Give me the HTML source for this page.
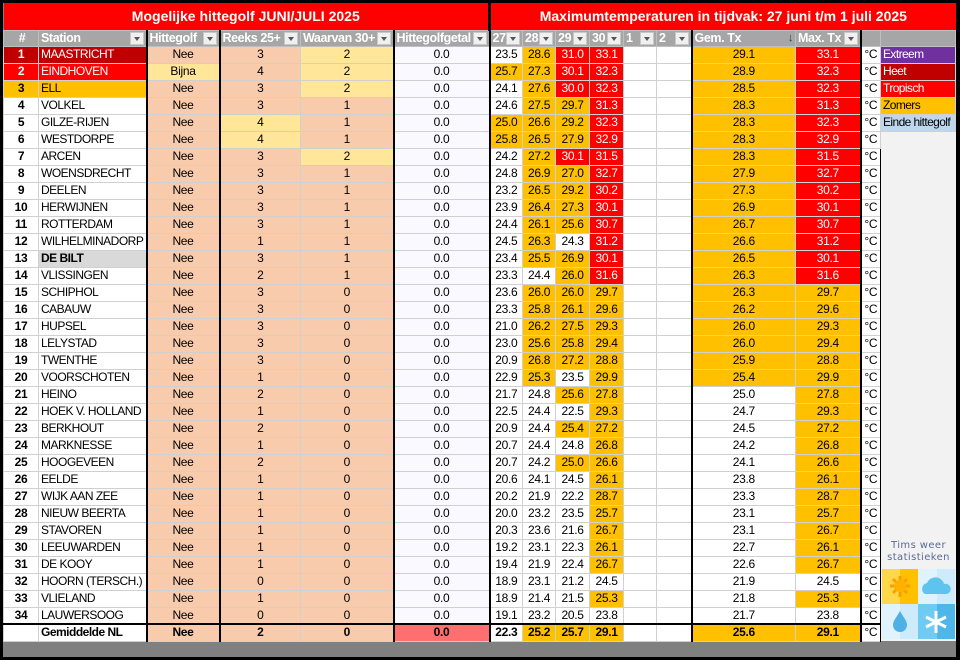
<!DOCTYPE html>
<html><head><meta charset="utf-8"><style>
*{margin:0;padding:0;box-sizing:border-box}
body{width:960px;height:660px;background:#000;overflow:hidden;font-family:"Liberation Sans",Arial,sans-serif;position:relative}
#wrap{position:absolute;left:3px;top:3px;width:953px;height:654px;background:#808080}
table{border-collapse:collapse;table-layout:fixed;width:953px;font-size:12px;letter-spacing:-0.3px}
td{border:1px solid #d0d0d0;height:17px;text-align:center;white-space:nowrap;overflow:hidden;padding:0;line-height:15px;color:#000;background:#fff}
tr.t td{height:27px;background:#f00;color:#fff;font-weight:bold;font-size:14px;border:none;letter-spacing:0}
tr.h td{height:16px;background:#a6a6a6;color:#fff;font-weight:bold;font-size:12.5px;text-align:left;padding-left:2px;position:relative;border:1px solid #bfbfbf;letter-spacing:-0.4px}
tr.h td i{position:absolute;right:2px;top:1px;width:14px;height:13px;background:#f0f0f0;border:1px solid #c8c8c8}
tr.h td i:after{content:"";position:absolute;left:3px;top:4px;border-left:3px solid transparent;border-right:3px solid transparent;border-top:4px solid #555}
tr.h td b.s{position:absolute;right:2px;top:0;font-size:11px;color:#333;font-weight:normal}
tr.d td:nth-child(2),tr.h td:nth-child(2){border-left:1px solid #000}
tr.d td:nth-child(3),tr.d td:nth-child(4),tr.d td:nth-child(6),tr.d td:nth-child(7),tr.d td:nth-child(13),tr.d td:nth-child(15),
tr.h td:nth-child(3),tr.h td:nth-child(4),tr.h td:nth-child(6),tr.h td:nth-child(7),tr.h td:nth-child(13),tr.h td:nth-child(15){border-left:2px solid #000}
tr.d td:nth-child(1){font-weight:bold}
tr.d td:nth-child(2){text-align:left;padding-left:2px;letter-spacing:-0.5px}
.p{background:#f8cbad}.y{background:#ffe699}.g{background:#f9f9ff}
.o{background:#ffc000}.r{background:#f00;color:#fff}.dr{background:#c00000;color:#fff}
.gr{background:#d9d9d9;font-weight:bold}
tr.a td{font-weight:bold;border-top:2px solid #000}
td.lg{text-align:left;padding-left:2px;border:1px solid #d0d0d0;letter-spacing:-0.6px}
td.c{font-size:12px}
</style></head><body><div id="wrap"><table>
<colgroup><col style="width:35px"><col style="width:108px"><col style="width:73px"><col style="width:81px"><col style="width:93px"><col style="width:96px"><col style="width:33px"><col style="width:33px"><col style="width:34px"><col style="width:34px"><col style="width:33px"><col style="width:35px"><col style="width:104px"><col style="width:65px"><col style="width:20px"><col style="width:75px"></colgroup>
<tr class="t"><td colspan="6">Mogelijke hittegolf JUNI/JULI 2025</td><td colspan="10" style="border-left:3px solid #000">Maximumtemperaturen in tijdvak: 27 juni t/m 1 juli 2025</td></tr>
<tr class="h"><td style="text-align:center">#</td><td>Station<i></i></td><td>Hittegolf<i></i></td><td>Reeks 25+<i></i></td><td>Waarvan 30+<i></i></td><td>Hittegolfgetal<i></i></td><td>27<i></i></td><td>28<i></i></td><td>29<i></i></td><td>30<i></i></td><td>1<i></i></td><td>2<i></i></td><td>Gem. Tx<b class="s">↓</b></td><td>Max. Tx<i></i></td><td></td><td></td></tr>
<tr class="d"><td class="dr">1</td><td class="dr">MAASTRICHT</td><td class="p">Nee</td><td class="p">3</td><td class="y">2</td><td class="g">0.0</td><td>23.5</td><td class="o">28.6</td><td class="r">31.0</td><td class="r">33.1</td><td></td><td></td><td class="o">29.1</td><td class="r">33.1</td><td class="c">°C</td><td class="lg" style="background:#7030a0;color:#fff">Extreem</td></tr>
<tr class="d"><td class="r">2</td><td class="r">EINDHOVEN</td><td class="y">Bijna</td><td class="p">4</td><td class="y">2</td><td class="g">0.0</td><td class="o">25.7</td><td class="o">27.3</td><td class="r">30.1</td><td class="r">32.3</td><td></td><td></td><td class="o">28.9</td><td class="r">32.3</td><td class="c">°C</td><td class="lg" style="background:#c00000;color:#fff">Heet</td></tr>
<tr class="d"><td class="o">3</td><td class="o">ELL</td><td class="p">Nee</td><td class="p">3</td><td class="y">2</td><td class="g">0.0</td><td>24.1</td><td class="o">27.6</td><td class="r">30.0</td><td class="r">32.3</td><td></td><td></td><td class="o">28.5</td><td class="r">32.3</td><td class="c">°C</td><td class="lg" style="background:#f00;color:#fff">Tropisch</td></tr>
<tr class="d"><td>4</td><td>VOLKEL</td><td class="p">Nee</td><td class="p">3</td><td class="p">1</td><td class="g">0.0</td><td>24.6</td><td class="o">27.5</td><td class="o">29.7</td><td class="r">31.3</td><td></td><td></td><td class="o">28.3</td><td class="r">31.3</td><td class="c">°C</td><td class="lg" style="background:#ffc000">Zomers</td></tr>
<tr class="d"><td>5</td><td>GILZE-RIJEN</td><td class="p">Nee</td><td class="y">4</td><td class="p">1</td><td class="g">0.0</td><td class="o">25.0</td><td class="o">26.6</td><td class="o">29.2</td><td class="r">32.3</td><td></td><td></td><td class="o">28.3</td><td class="r">32.3</td><td class="c">°C</td><td class="lg" style="background:#bdd7ee">Einde hittegolf</td></tr>
<tr class="d"><td>6</td><td>WESTDORPE</td><td class="p">Nee</td><td class="y">4</td><td class="p">1</td><td class="g">0.0</td><td class="o">25.8</td><td class="o">26.5</td><td class="o">27.9</td><td class="r">32.9</td><td></td><td></td><td class="o">28.3</td><td class="r">32.9</td><td class="c">°C</td><td rowspan="30" style="background:#f2f2f2;border:none;border-left:1px solid #000"></td></tr>
<tr class="d"><td>7</td><td>ARCEN</td><td class="p">Nee</td><td class="p">3</td><td class="y">2</td><td class="g">0.0</td><td>24.2</td><td class="o">27.2</td><td class="r">30.1</td><td class="r">31.5</td><td></td><td></td><td class="o">28.3</td><td class="r">31.5</td><td class="c">°C</td></tr>
<tr class="d"><td>8</td><td>WOENSDRECHT</td><td class="p">Nee</td><td class="p">3</td><td class="p">1</td><td class="g">0.0</td><td>24.8</td><td class="o">26.9</td><td class="o">27.0</td><td class="r">32.7</td><td></td><td></td><td class="o">27.9</td><td class="r">32.7</td><td class="c">°C</td></tr>
<tr class="d"><td>9</td><td>DEELEN</td><td class="p">Nee</td><td class="p">3</td><td class="p">1</td><td class="g">0.0</td><td>23.2</td><td class="o">26.5</td><td class="o">29.2</td><td class="r">30.2</td><td></td><td></td><td class="o">27.3</td><td class="r">30.2</td><td class="c">°C</td></tr>
<tr class="d"><td>10</td><td>HERWIJNEN</td><td class="p">Nee</td><td class="p">3</td><td class="p">1</td><td class="g">0.0</td><td>23.9</td><td class="o">26.4</td><td class="o">27.3</td><td class="r">30.1</td><td></td><td></td><td class="o">26.9</td><td class="r">30.1</td><td class="c">°C</td></tr>
<tr class="d"><td>11</td><td>ROTTERDAM</td><td class="p">Nee</td><td class="p">3</td><td class="p">1</td><td class="g">0.0</td><td>24.4</td><td class="o">26.1</td><td class="o">25.6</td><td class="r">30.7</td><td></td><td></td><td class="o">26.7</td><td class="r">30.7</td><td class="c">°C</td></tr>
<tr class="d"><td>12</td><td>WILHELMINADORP</td><td class="p">Nee</td><td class="p">1</td><td class="p">1</td><td class="g">0.0</td><td>24.5</td><td class="o">26.3</td><td>24.3</td><td class="r">31.2</td><td></td><td></td><td class="o">26.6</td><td class="r">31.2</td><td class="c">°C</td></tr>
<tr class="d"><td>13</td><td class="gr">DE BILT</td><td class="p">Nee</td><td class="p">3</td><td class="p">1</td><td class="g">0.0</td><td>23.4</td><td class="o">25.5</td><td class="o">26.9</td><td class="r">30.1</td><td></td><td></td><td class="o">26.5</td><td class="r">30.1</td><td class="c">°C</td></tr>
<tr class="d"><td>14</td><td>VLISSINGEN</td><td class="p">Nee</td><td class="p">2</td><td class="p">1</td><td class="g">0.0</td><td>23.3</td><td>24.4</td><td class="o">26.0</td><td class="r">31.6</td><td></td><td></td><td class="o">26.3</td><td class="r">31.6</td><td class="c">°C</td></tr>
<tr class="d"><td>15</td><td>SCHIPHOL</td><td class="p">Nee</td><td class="p">3</td><td class="p">0</td><td class="g">0.0</td><td>23.6</td><td class="o">26.0</td><td class="o">26.0</td><td class="o">29.7</td><td></td><td></td><td class="o">26.3</td><td class="o">29.7</td><td class="c">°C</td></tr>
<tr class="d"><td>16</td><td>CABAUW</td><td class="p">Nee</td><td class="p">3</td><td class="p">0</td><td class="g">0.0</td><td>23.3</td><td class="o">25.8</td><td class="o">26.1</td><td class="o">29.6</td><td></td><td></td><td class="o">26.2</td><td class="o">29.6</td><td class="c">°C</td></tr>
<tr class="d"><td>17</td><td>HUPSEL</td><td class="p">Nee</td><td class="p">3</td><td class="p">0</td><td class="g">0.0</td><td>21.0</td><td class="o">26.2</td><td class="o">27.5</td><td class="o">29.3</td><td></td><td></td><td class="o">26.0</td><td class="o">29.3</td><td class="c">°C</td></tr>
<tr class="d"><td>18</td><td>LELYSTAD</td><td class="p">Nee</td><td class="p">3</td><td class="p">0</td><td class="g">0.0</td><td>23.0</td><td class="o">25.6</td><td class="o">25.8</td><td class="o">29.4</td><td></td><td></td><td class="o">26.0</td><td class="o">29.4</td><td class="c">°C</td></tr>
<tr class="d"><td>19</td><td>TWENTHE</td><td class="p">Nee</td><td class="p">3</td><td class="p">0</td><td class="g">0.0</td><td>20.9</td><td class="o">26.8</td><td class="o">27.2</td><td class="o">28.8</td><td></td><td></td><td class="o">25.9</td><td class="o">28.8</td><td class="c">°C</td></tr>
<tr class="d"><td>20</td><td>VOORSCHOTEN</td><td class="p">Nee</td><td class="p">1</td><td class="p">0</td><td class="g">0.0</td><td>22.9</td><td class="o">25.3</td><td>23.5</td><td class="o">29.9</td><td></td><td></td><td class="o">25.4</td><td class="o">29.9</td><td class="c">°C</td></tr>
<tr class="d"><td>21</td><td>HEINO</td><td class="p">Nee</td><td class="p">2</td><td class="p">0</td><td class="g">0.0</td><td>21.7</td><td>24.8</td><td class="o">25.6</td><td class="o">27.8</td><td></td><td></td><td>25.0</td><td class="o">27.8</td><td class="c">°C</td></tr>
<tr class="d"><td>22</td><td>HOEK V. HOLLAND</td><td class="p">Nee</td><td class="p">1</td><td class="p">0</td><td class="g">0.0</td><td>22.5</td><td>24.4</td><td>22.5</td><td class="o">29.3</td><td></td><td></td><td>24.7</td><td class="o">29.3</td><td class="c">°C</td></tr>
<tr class="d"><td>23</td><td>BERKHOUT</td><td class="p">Nee</td><td class="p">2</td><td class="p">0</td><td class="g">0.0</td><td>20.9</td><td>24.4</td><td class="o">25.4</td><td class="o">27.2</td><td></td><td></td><td>24.5</td><td class="o">27.2</td><td class="c">°C</td></tr>
<tr class="d"><td>24</td><td>MARKNESSE</td><td class="p">Nee</td><td class="p">1</td><td class="p">0</td><td class="g">0.0</td><td>20.7</td><td>24.4</td><td>24.8</td><td class="o">26.8</td><td></td><td></td><td>24.2</td><td class="o">26.8</td><td class="c">°C</td></tr>
<tr class="d"><td>25</td><td>HOOGEVEEN</td><td class="p">Nee</td><td class="p">2</td><td class="p">0</td><td class="g">0.0</td><td>20.7</td><td>24.2</td><td class="o">25.0</td><td class="o">26.6</td><td></td><td></td><td>24.1</td><td class="o">26.6</td><td class="c">°C</td></tr>
<tr class="d"><td>26</td><td>EELDE</td><td class="p">Nee</td><td class="p">1</td><td class="p">0</td><td class="g">0.0</td><td>20.6</td><td>24.1</td><td>24.5</td><td class="o">26.1</td><td></td><td></td><td>23.8</td><td class="o">26.1</td><td class="c">°C</td></tr>
<tr class="d"><td>27</td><td>WIJK AAN ZEE</td><td class="p">Nee</td><td class="p">1</td><td class="p">0</td><td class="g">0.0</td><td>20.2</td><td>21.9</td><td>22.2</td><td class="o">28.7</td><td></td><td></td><td>23.3</td><td class="o">28.7</td><td class="c">°C</td></tr>
<tr class="d"><td>28</td><td>NIEUW BEERTA</td><td class="p">Nee</td><td class="p">1</td><td class="p">0</td><td class="g">0.0</td><td>20.0</td><td>23.2</td><td>23.5</td><td class="o">25.7</td><td></td><td></td><td>23.1</td><td class="o">25.7</td><td class="c">°C</td></tr>
<tr class="d"><td>29</td><td>STAVOREN</td><td class="p">Nee</td><td class="p">1</td><td class="p">0</td><td class="g">0.0</td><td>20.3</td><td>23.6</td><td>21.6</td><td class="o">26.7</td><td></td><td></td><td>23.1</td><td class="o">26.7</td><td class="c">°C</td></tr>
<tr class="d"><td>30</td><td>LEEUWARDEN</td><td class="p">Nee</td><td class="p">1</td><td class="p">0</td><td class="g">0.0</td><td>19.2</td><td>23.1</td><td>22.3</td><td class="o">26.1</td><td></td><td></td><td>22.7</td><td class="o">26.1</td><td class="c">°C</td></tr>
<tr class="d"><td>31</td><td>DE KOOY</td><td class="p">Nee</td><td class="p">1</td><td class="p">0</td><td class="g">0.0</td><td>19.4</td><td>21.9</td><td>22.4</td><td class="o">26.7</td><td></td><td></td><td>22.6</td><td class="o">26.7</td><td class="c">°C</td></tr>
<tr class="d"><td>32</td><td>HOORN (TERSCH.)</td><td class="p">Nee</td><td class="p">0</td><td class="p">0</td><td class="g">0.0</td><td>18.9</td><td>23.1</td><td>21.2</td><td>24.5</td><td></td><td></td><td>21.9</td><td>24.5</td><td class="c">°C</td></tr>
<tr class="d"><td>33</td><td>VLIELAND</td><td class="p">Nee</td><td class="p">1</td><td class="p">0</td><td class="g">0.0</td><td>18.9</td><td>21.4</td><td>21.5</td><td class="o">25.3</td><td></td><td></td><td>21.8</td><td class="o">25.3</td><td class="c">°C</td></tr>
<tr class="d"><td>34</td><td>LAUWERSOOG</td><td class="p">Nee</td><td class="p">0</td><td class="p">0</td><td class="g">0.0</td><td>19.1</td><td>23.2</td><td>20.5</td><td>23.8</td><td></td><td></td><td>21.7</td><td>23.8</td><td class="c">°C</td></tr>
<tr class="d a"><td></td><td>Gemiddelde NL</td><td class="p">Nee</td><td class="p">2</td><td class="p">0</td><td style="background:#ff6f6f">0.0</td><td>22.3</td><td class="o">25.2</td><td class="o">25.7</td><td class="o">29.1</td><td></td><td></td><td class="o">25.6</td><td class="o">29.1</td><td class="c" style="font-weight:normal">°C</td></tr>
</table></div>
<div style="position:absolute;left:882px;top:540px;width:73px;height:100px;background:#f2f2f2">
<div style="font-size:11px;line-height:12px;color:#5a6a96;text-align:center;letter-spacing:0.4px;font-family:'DejaVu Sans',sans-serif;font-size:10px">Tims weer<br>statistieken</div>
<svg width="73" height="70" viewBox="0 0 73 70" style="position:absolute;left:0;top:29px">
<rect x="0" y="0" width="36" height="35" fill="#ffd84a"/><rect x="18" y="0" width="18" height="35" fill="#ffc000"/>
<rect x="36" y="0" width="37" height="35" fill="#dff3fd"/><rect x="55" y="0" width="18" height="35" fill="#cdebfb"/>
<rect x="0" y="35" width="36" height="35" fill="#dff3fd"/><rect x="18" y="35" width="18" height="35" fill="#cdebfb"/>
<rect x="36" y="35" width="37" height="35" fill="#6fcbf2"/><rect x="55" y="35" width="18" height="35" fill="#4fb6ea"/>
<g stroke="#f7a000" stroke-width="3"><line x1="18" y1="7" x2="18" y2="28"/><line x1="8" y1="17" x2="28" y2="17"/><line x1="11" y1="10" x2="25" y2="24"/><line x1="25" y1="10" x2="11" y2="24"/></g>
<circle cx="18" cy="17" r="6" fill="#ffb000"/>
<path d="M43 25 a6 6 0 0 1 2 -11 a9 9 0 0 1 17 1 a5 5 0 0 1 3 10 z" fill="#5ec4ef"/>
<path d="M18 42 C14 49 11 52 11 56 a7 7 0 0 0 14 0 C25 52 22 49 18 42z" fill="#4fb0e6"/>
<g stroke="#fff" stroke-width="3"><line x1="54" y1="42" x2="54" y2="64"/><line x1="44" y1="48" x2="64" y2="58"/><line x1="44" y1="58" x2="64" y2="48"/></g>
</svg></div>
</body></html>
